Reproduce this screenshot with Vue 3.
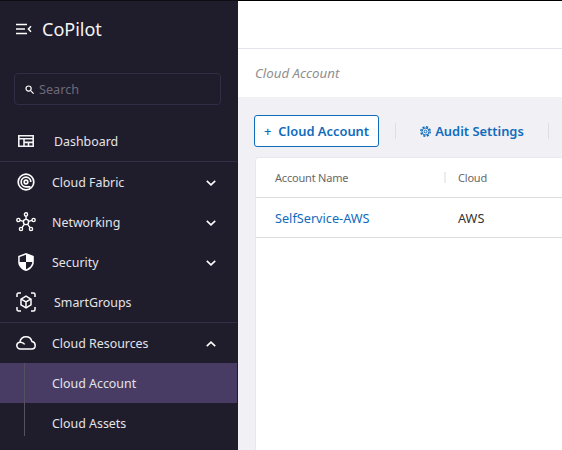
<script setup>
const columns = ['Account Name', 'Cloud']
</script>

<template>
  <div class="app">
    <aside class="sidebar">
      <div class="brand">
        <svg class="brand-icon" width="16" height="12" viewBox="0 0 16 12" fill="none" stroke="#fff" stroke-width="1.7">
          <path d="M0 1.500h11M0 6h9M0 10.500h11" />
          <path d="M15 3.200 12.400 6 15 8.800" stroke-width="1.500" />
        </svg>
        <span class="brand-name">CoPilot</span>
      </div>
      <div class="search">
        <svg width="9" height="9" viewBox="0 0 9 9" fill="none" stroke="#fff" stroke-width="1.200">
          <circle cx="3.600" cy="3.600" r="2.600" />
          <path d="M5.600 5.600 8.600 8.600" />
        </svg>
        <span>Search</span>
      </div>
      <nav class="nav">
        <div class="item single divided first">
          <svg class="icon" width="16" height="12" viewBox="0 0 16 12" fill="none" stroke="#f2f2f2" stroke-width="1.600">
            <path d="M.8.800h14.400v10.400H.8zM.8 3.800h14.400M6 3.800v7.400M6 7.400h9.200M10.500 7.400v3.800" />
          </svg>
          <span>Dashboard</span>
        </div>
        <div class="item">
          <svg class="icon" width="18" height="18" viewBox="0 0 18 18" fill="none" stroke="#fff" stroke-width="1.700">
            <circle cx="9" cy="9" r="7.800" />
            <path d="M13.800 9A4.800 4.800 0 1 0 9 13.800h4.500" />
            <circle cx="9" cy="9" r="1.800" />
          </svg>
          <span>Cloud Fabric</span>
          <svg class="chev" width="10" height="6" viewBox="0 0 10 6" fill="none" stroke="#fff" stroke-width="1.600"><path d="m.8.800 4.200 4 4.200-4" /></svg>
        </div>
        <div class="item">
          <svg class="icon" width="20" height="20" viewBox="0 0 20 20" fill="none" stroke="#fff" stroke-width="1.400">
            <circle cx="10" cy="10" r="2.600" />
            <circle cx="10" cy="2.400" r="1.600" />
            <circle cx="2.400" cy="8" r="1.600" />
            <circle cx="17.600" cy="8" r="1.600" />
            <circle cx="5" cy="17" r="1.600" />
            <circle cx="15" cy="17" r="1.600" />
            <path d="M10 4v3.400M4 8.400l3.500 1M16 8.400l-3.500 1M6 15.700l2.500-3.500M14 15.700l-2.500-3.500" />
          </svg>
          <span>Networking</span>
          <svg class="chev" width="10" height="6" viewBox="0 0 10 6" fill="none" stroke="#fff" stroke-width="1.600"><path d="m.8.800 4.200 4 4.200-4" /></svg>
        </div>
        <div class="item">
          <svg class="icon" width="16" height="18" viewBox="0 0 16 18">
            <path fill="#fff" d="M8 0 .2 3v6c0 4.200 3.300 7.700 7.800 9 4.500-1.300 7.800-4.800 7.800-9V3z" />
            <path fill="#1f1c2b" d="M8 1.700v7.300H1.700V3.900zM8 9h6.300c-.3 3.300-2.900 6-6.300 7.200z" />
          </svg>
          <span>Security</span>
          <svg class="chev" width="10" height="6" viewBox="0 0 10 6" fill="none" stroke="#fff" stroke-width="1.600"><path d="m.8.800 4.200 4 4.200-4" /></svg>
        </div>
        <div class="item single divided tall">
          <svg class="icon" width="20" height="20" viewBox="0 0 20 20" fill="none" stroke="#fff" stroke-width="1.500">
            <path d="M1 5V2.500C1 1.600 1.600 1 2.500 1H5M15 1h2.500c.9 0 1.500.6 1.500 1.500V5M19 15v2.500c0 .9-.6 1.500-1.500 1.500H15M5 19H2.500C1.600 19 1 18.400 1 17.500V15" />
            <path d="m10 4.200 5 2.900v5.800l-5 2.900-5-2.900V7.100z" />
            <path d="m5.200 7.200 4.800 2.800 4.800-2.800M10 10v5.600" />
          </svg>
          <span>SmartGroups</span>
        </div>
        <div class="item">
          <svg class="icon" width="20" height="14" viewBox="0 0 20 14" fill="none" stroke="#fff" stroke-width="1.500">
            <path d="M4.500 13C2.300 13 .8 11.500.8 9.600c0-1.800 1.300-3.200 3-3.400C4.500 3 7 .8 10 .8c3 0 5.300 2 6 4.800 1.900.4 3.200 1.900 3.200 3.900 0 2-1.500 3.500-3.500 3.500z" />
            <path d="M4 6.200c2-.2 3.600.7 4.700 2.200" />
          </svg>
          <span>Cloud Resources</span>
          <svg class="chev" width="10" height="6" viewBox="0 0 10 6" fill="none" stroke="#fff" stroke-width="1.600"><path d="m.8 5.200 4.200-4 4.200 4" /></svg>
        </div>
        <div class="sub">
          <div class="sub-item active">Cloud Account</div>
          <div class="sub-item">Cloud Assets</div>
        </div>
      </nav>
    </aside>
    <main class="main">
      <div class="topbar"></div>
      <div class="crumb">Cloud Account</div>
      <section class="content">
        <div class="toolbar">
          <button class="primary"><span class="plus">+</span>Cloud Account</button>
          <i class="sep"></i>
          <button class="link">
            <svg width="11" height="11" viewBox="0 0 11 11" fill="none" stroke="#0f6cbd">
              <circle cx="5.500" cy="5.500" r="4.700" stroke-width="1.500" stroke-dasharray="2.100 1.590" />
              <circle cx="5.500" cy="5.500" r="3.500" stroke-width="1" />
              <circle cx="5.500" cy="5.500" r="1.400" stroke-width="1" />
            </svg>
            Audit Settings
          </button>
          <i class="sep"></i>
        </div>
        <div class="card">
          <div class="row head">
            <div class="col-name">{{ columns[0] }}</div>
            <div class="col-cloud">{{ columns[1] }}</div>
          </div>
          <div class="row body">
            <div class="col-name account">SelfService-AWS</div>
            <div class="col-cloud">AWS</div>
          </div>
        </div>
      </section>
    </main>
  </div>
</template>

<style scoped>
.app {
  display: flex;
  width: 562px;
  height: 450px;
  overflow: hidden;
  font-family: "Noto Sans", "Open Sans", sans-serif;
}
.sidebar {
  width: 238px;
  flex: none;
  background: #1f1c2b;
  color: #e4e3e8;
  font-size: 12.4px;
  box-sizing: border-box;
  border-top: 1px solid #0d0c12;
  border-right: 1px solid #1f1c2b;
}
.brand {
  display: flex;
  align-items: center;
  height: 55px;
  padding: 0 0 2px 16px;
  gap: 10px;
  color: #f5f5f5;
  font-size: 18px;
}
.search {
  display: flex;
  align-items: center;
  gap: 5px;
  height: 30px;
  margin: 15px 16px 0 14px;
  padding-left: 10px;
  border: 1px solid #312d44;
  border-radius: 4px;
  color: #6c6a78;
  font-size: 12.7px;
}
.nav {
  margin-top: 17px;
}
.item {
  display: flex;
  align-items: center;
  height: 40px;
  position: relative;
  box-sizing: border-box;
}
.item.divided {
  border-bottom: 1px solid #342f47;
}
.item.first > span {
  padding-bottom: 1px;
}
.item.tall {
  height: 41px;
}
.icon {
  position: absolute;
  left: 26px;
  top: 50%;
  transform: translate(-50%, -50%);
}
.item.first .icon {
  margin-top: -1px;
}
.item > span {
  margin-left: 52px;
}
.item.single > span {
  margin-left: 54px;
}
.chev {
  position: absolute;
  right: 21px;
  top: 18px;
}
.sub {
  position: relative;
}
.sub::before {
  content: "";
  position: absolute;
  left: 24px;
  top: 0;
  bottom: 7px;
  width: 1px;
  background: #55525f;
}
.sub-item {
  height: 40px;
  line-height: 41px;
  padding-left: 52px;
}
.sub-item.active {
  background: #483c65;
}
.main {
  flex: 1;
  display: flex;
  flex-direction: column;
  background: #f0f0f5;
}
.topbar {
  height: 48px;
  flex: none;
  background: #fff;
  box-sizing: border-box;
  border-top: 1px solid #000;
}
.crumb {
  height: 49px;
  flex: none;
  box-sizing: border-box;
  background: #fff;
  border-top: 1px solid #e4e4ea;
  padding: 15px 0 0 17px;
  color: #8f8f8f;
  font-size: 13.300px;
  font-style: italic;
}
.content {
  padding: 18px 0 0 16px;
  flex: 1;
  display: flex;
  flex-direction: column;
  min-height: 0;
}
.toolbar {
  display: flex;
  align-items: center;
  height: 32px;
  flex: none;
}
button {
  font: inherit;
  font-size: 12.900px;
  font-weight: 600;
  color: #0f6cbd;
  background: none;
  border: 0;
  padding: 0;
}
.primary {
  width: 125px;
  height: 32px;
  border: 1px solid #0f6cbd;
  border-radius: 3px;
  background: #fff;
}
.plus {
  font-size: 13px;
  font-weight: 500;
  margin-right: 7px;
}
.sep {
  width: 1px;
  height: 16px;
  background: #dedee4;
}
.toolbar .sep:nth-child(2) {
  margin-left: 16px;
}
.link {
  width: 152px;
  display: flex;
  align-items: center;
  justify-content: center;
  gap: 4px;
}
.card {
  margin: 10px 0 0 1px;
  flex: 1;
  background: #fff;
  border-radius: 4px 0 0 0;
  border: 1px solid #e8e8ee;
  border-right: 0;
  border-bottom: 0;
}
.row {
  display: flex;
  align-items: center;
  height: 40px;
  box-sizing: border-box;
  border-bottom: 1px solid #dcdce0;
  font-size: 12.700px;
}
.col-name {
  width: 190px;
  flex: none;
  box-sizing: border-box;
  padding-left: 19px;
  position: relative;
}
.col-cloud {
  padding-left: 12px;
}
.head {
  color: #696969;
  font-size: 11px;
  letter-spacing: -0.2px;
}
.head .col-name::after {
  content: "";
  position: absolute;
  right: 0;
  top: 2px;
  bottom: 2px;
  width: 2px;
  background: #ececec;
}
.body {
  color: #333;
}
.account {
  color: #0f6cbd;
}
</style>

<style>
html, body {
  margin: 0;
  padding: 0;
  background: #f0f0f5;
}
</style>
